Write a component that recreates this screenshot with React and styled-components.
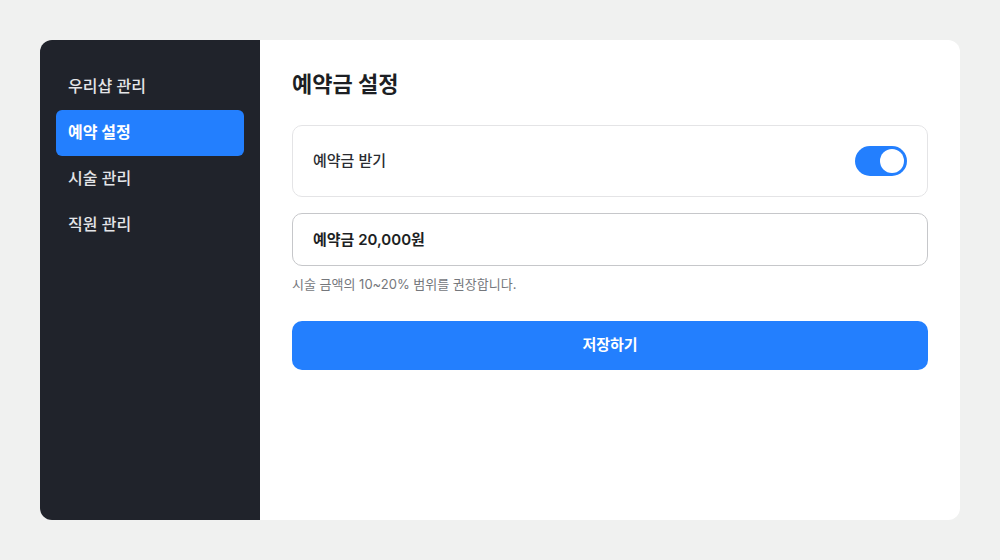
import React, { useState } from "react";
import styled, { createGlobalStyle } from "styled-components";

const Global = createGlobalStyle`
  html, body { margin: 0; padding: 0; background: #f0f1f0; }
  body { font-family: Inter, "Noto Sans CJK KR", sans-serif; }
  * { box-sizing: border-box; }
`;

const Page = styled.div`
  width: 1000px;
  height: 560px;
  padding: 40px;
  background: #f0f1f0;
`;

const Card = styled.div`
  display: flex;
  width: 920px;
  height: 480px;
  border-radius: 12px;
  overflow: hidden;
  background: #ffffff;
`;

const Sidebar = styled.nav`
  width: 220px;
  flex-shrink: 0;
  background: #20232b;
  padding: 24px 16px;
  display: flex;
  flex-direction: column;
`;

const NavItem = styled.div`
  height: 46px;
  display: flex;
  align-items: center;
  padding: 0 12px 4px;
  border-radius: 6px;
  font-size: 16px;
  font-weight: ${(p) => (p.$active ? 700 : 500)};
  color: ${(p) => (p.$active ? "#ffffff" : "#e4e5e8")};
  background: ${(p) => (p.$active ? "#237ffe" : "transparent")};
`;

const Main = styled.main`
  flex: 1;
  padding: 28px 32px;
  display: flex;
  flex-direction: column;
`;

const Title = styled.h1`
  margin: 0 0 25px;
  font-size: 22px;
  line-height: 32px;
  font-weight: 700;
  color: #1d1f24;
`;

const ToggleRow = styled.div`
  height: 72px;
  border: 1px solid #e4e4e6;
  border-radius: 10px;
  padding: 0 20px;
  display: flex;
  align-items: center;
  justify-content: space-between;
`;

const RowLabel = styled.span`
  font-size: 15px;
  font-weight: 500;
  color: #2a2c31;
  padding-bottom: 4px;
`;

const Switch = styled.button`
  width: 52px;
  height: 30px;
  border: none;
  padding: 3px;
  border-radius: 15px;
  background: ${(p) => (p.$on ? "#237ffe" : "#cfd2d8")};
  display: flex;
  justify-content: ${(p) => (p.$on ? "flex-end" : "flex-start")};
  cursor: pointer;
`;

const Knob = styled.span`
  width: 24px;
  height: 24px;
  border-radius: 50%;
  background: #ffffff;
`;

const AmountBox = styled.div`
  margin-top: 16px;
  height: 53px;
  border: 1px solid #c6c7ca;
  border-radius: 10px;
  padding: 0 20px 2px;
  display: flex;
  align-items: center;
  font-size: 15px;
  font-weight: 600;
  color: #1d1f24;
`;

const Hint = styled.p`
  margin: 9px 0 0;
  font-size: 13px;
  line-height: 18px;
  color: #75777c;
`;

const SaveButton = styled.button`
  margin-top: 28px;
  height: 49px;
  border: none;
  border-radius: 10px;
  background: #237ffe;
  color: #ffffff;
  font-family: inherit;
  font-size: 15px;
  font-weight: 700;
  padding-bottom: 5px;
  cursor: pointer;
`;

const navs = ["우리샵 관리", "예약 설정", "시술 관리", "직원 관리"];

export default function App() {
  const [on, setOn] = useState(true);
  return (
    <>
      <Global />
      <Page>
        <Card>
          <Sidebar>
            {navs.map((n, i) => (
              <NavItem key={n} $active={i === 1}>
                {n}
              </NavItem>
            ))}
          </Sidebar>
          <Main>
            <Title>예약금 설정</Title>
            <ToggleRow>
              <RowLabel>예약금 받기</RowLabel>
              <Switch $on={on} onClick={() => setOn(!on)} aria-label="예약금 받기">
                <Knob />
              </Switch>
            </ToggleRow>
            <AmountBox>예약금 20,000원</AmountBox>
            <Hint>시술 금액의 10~20% 범위를 권장합니다.</Hint>
            <SaveButton>저장하기</SaveButton>
          </Main>
        </Card>
      </Page>
    </>
  );
}
